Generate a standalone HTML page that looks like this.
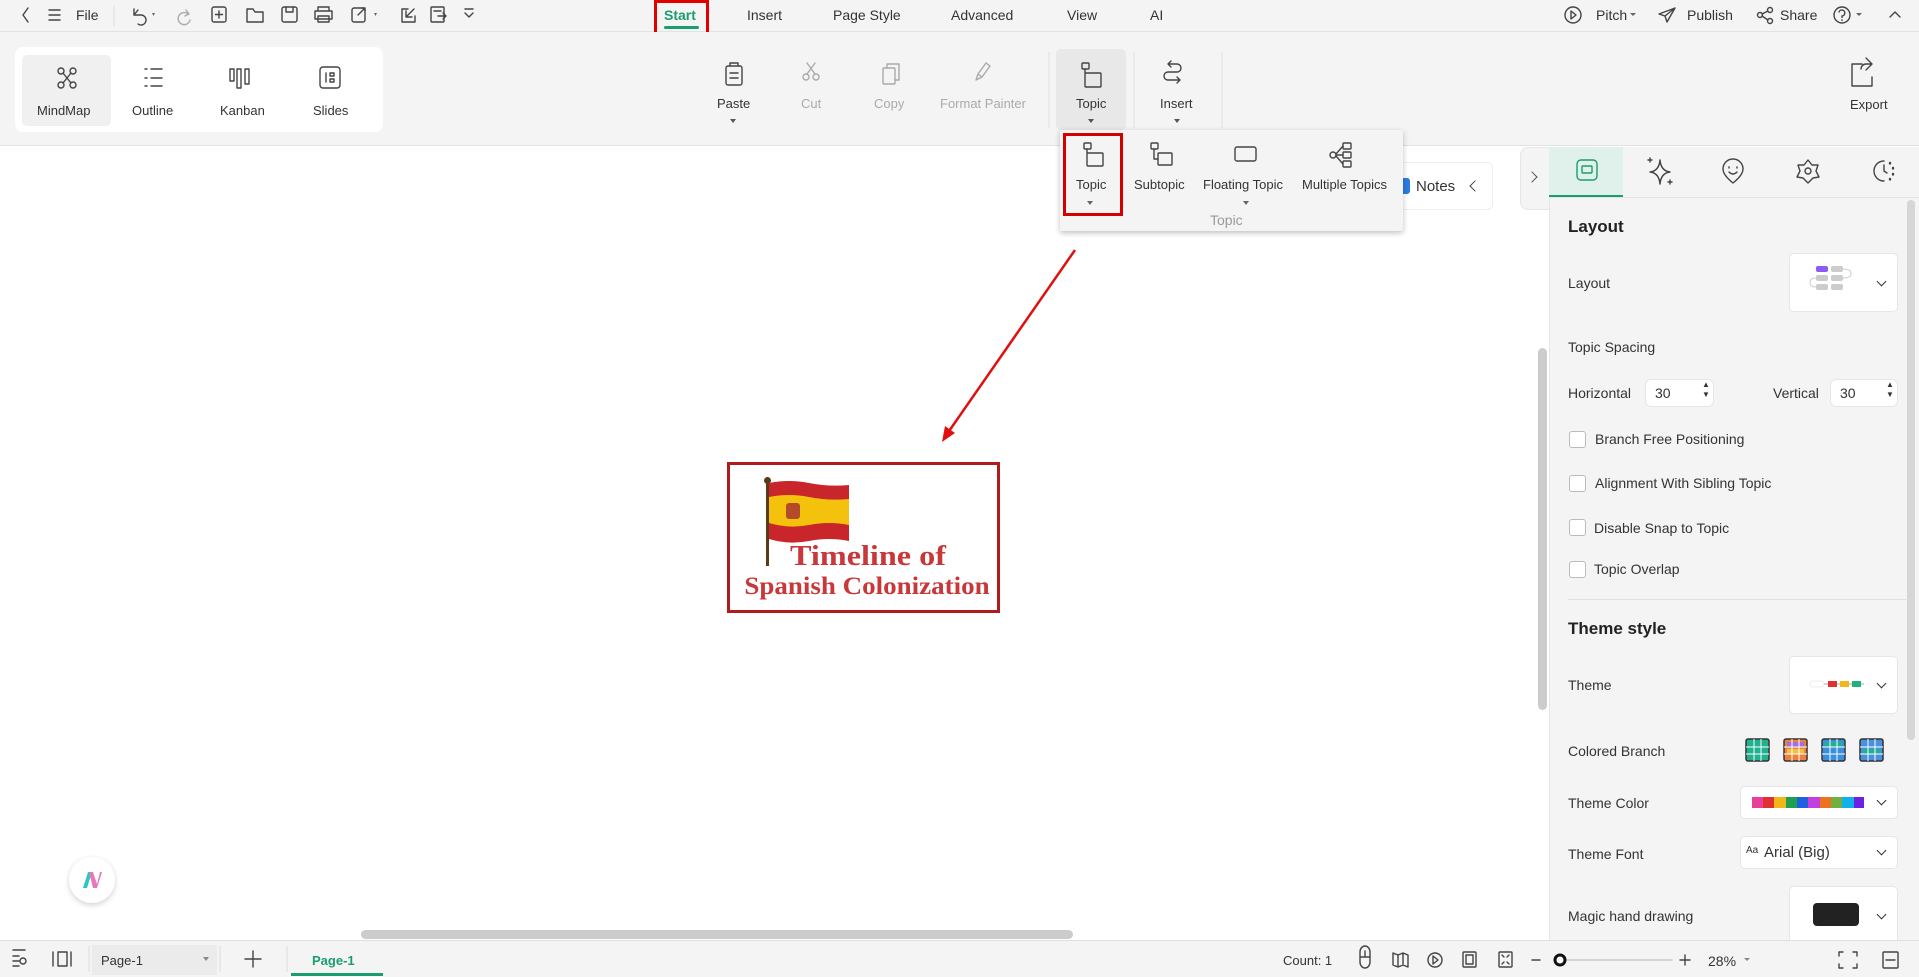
<!DOCTYPE html>
<html><head><meta charset="utf-8">
<style>
*{margin:0;padding:0;box-sizing:border-box}
body{width:1919px;height:977px;overflow:hidden;position:relative;background:#fff;font-family:"Liberation Sans",sans-serif;font-size:13px;color:#333}
.a{position:absolute}
.t{position:absolute;white-space:nowrap}
svg{position:absolute;overflow:visible}
.ic{fill:none;stroke:#444;stroke-width:1.4;stroke-linecap:round;stroke-linejoin:round}
.gr{stroke:#aaa}
.lbl{font-size:14px;color:#333}
.cb{position:absolute;width:17px;height:17px;border:1px solid #bbb;border-radius:3px;background:#fff;left:1569px}
.box{position:absolute;background:#fff;border:1px solid #e6e6e6;border-radius:5px}
.chev{position:absolute;width:7px;height:7px;border-right:1.6px solid #333;border-bottom:1.6px solid #333;transform:rotate(45deg)}
</style></head><body>
<!-- top bar -->
<div class="a" style="left:0;top:0;width:1919px;height:32px;background:#f4f4f4;border-bottom:1px solid #e2e2e2"></div>
<svg width="1919" height="32" style="left:0;top:0">
<g class="ic">
<path d="M28 8l-5 7 5 7"/>
<path d="M49 10h11M49 15h11M49 20h11"/>
<path d="M134 9v6h7a5 5 0 1 1-3 9"/><path d="M134 15l4-5"/>
<g class="gr"><path d="M186 10l3 4-4 2"/><path d="M188 14a6 6 0 1 0 2 6"/></g>
<rect x="212" y="7" width="14" height="15" rx="2"/><path d="M219 11v7M215.5 14.5h7"/>
<path d="M247 9h6l2 3h8v10h-16z"/>
<rect x="282" y="7" width="15" height="15" rx="2"/><path d="M286 7v5h7V7"/>
<path d="M318 11V7h11v4M315 11h17v8h-17zM318 16h11v6h-11z"/>
<rect x="352" y="8" width="13" height="14" rx="2"/><path d="M358 15l7-7M362 8h3v3"/>
<path d="M408 9h-6v13h13v-6M406 17l8-8M406 11v6h6"/>
<rect x="431" y="7" width="13" height="15" rx="1"/><path d="M434 11h7M438 16h8M443 13l3 3-3 3"/>
<path d="M465 13l4 4 4-4M465 9h8"/>
</g>
<path d="M152 13l3 0-1.5 3z" fill="#666"/><path d="M374 13l3 0-1.5 3z" fill="#666"/>
<line x1="114" y1="6" x2="114" y2="26" stroke="#ddd"/>
</svg>
<div class="t" style="left:76px;top:7px;font-size:14px">File</div>
<div class="a" style="left:654px;top:0;width:55px;height:38px;border:3px solid #e00000"></div>
<div class="t" style="left:664px;top:7px;font-size:14px;font-weight:bold;color:#1a9e6e">Start</div>
<div class="a" style="left:664px;top:26px;width:35px;height:3px;background:#1a9e6e;border-radius:2px"></div>
<div class="t" style="left:747px;top:7px;font-size:14px">Insert</div>
<div class="t" style="left:833px;top:7px;font-size:14px">Page Style</div>
<div class="t" style="left:951px;top:7px;font-size:14px">Advanced</div>
<div class="t" style="left:1067px;top:7px;font-size:14px">View</div>
<div class="t" style="left:1150px;top:7px;font-size:14px">AI</div>
<svg width="1919" height="32" style="left:0;top:0"><g class="ic">
<circle cx="1573" cy="15" r="8"/><path d="M1571 11v8l5-4z"/>
<path d="M1675 8l-16 6 6 2 2 6z M1665 16l10-8"/>
<circle cx="1770" cy="10" r="2.5"/><circle cx="1770" cy="21" r="2.5"/><circle cx="1760" cy="15" r="2.5"/><path d="M1762 14l6-3M1762 16l6 4"/>
<circle cx="1842" cy="15" r="8"/><path d="M1839 12a3 3 0 1 1 3 4v1.5M1842 20v.5"/>
<path d="M1890 17l5-5 5 5"/>
</g><path d="M1630 13h6l-3 3z M1856 13h6l-3 3z" fill="#666"/></svg>
<div class="t" style="left:1596px;top:7px;font-size:14px">Pitch</div>
<div class="t" style="left:1687px;top:7px;font-size:14px">Publish</div>
<div class="t" style="left:1780px;top:7px;font-size:14px">Share</div>

<!-- toolbar -->
<div class="a" style="left:0;top:32px;width:1919px;height:114px;background:#f4f4f4;border-bottom:1px solid #e2e2e2"></div>
<div class="a" style="left:15px;top:47px;width:368px;height:85px;background:#fff;border-radius:8px"></div>
<div class="a" style="left:22px;top:55px;width:89px;height:71px;background:#f0f0f0;border-radius:5px"></div>
<svg width="1919" height="146" style="left:0;top:0"><g class="ic" stroke-width="1.5">
<circle cx="61" cy="71" r="3"/><circle cx="73" cy="71" r="3"/><circle cx="61" cy="85" r="3"/><circle cx="73" cy="85" r="3"/><path d="M63 73l8 10M71 73l-8 10"/>
<path d="M145 69h2M151 69h11M145 78h2M151 78h11M145 86h2M151 86h11"/>
<rect x="230" y="69" width="4" height="12"/><rect x="237" y="69" width="4" height="19"/><rect x="245" y="69" width="4" height="15"/>
<rect x="320" y="67" width="20" height="21" rx="3"/><path d="M326 73v9M330 73h4v3h-4zM330 79h4v3h-4z"/>
<rect x="726" y="66" width="16" height="19" rx="2"/><path d="M730 66v-3h8v3M730 73h8M730 78h8"/>
<g class="gr"><circle cx="806" cy="77" r="3"/><circle cx="816" cy="77" r="3"/><path d="M807 74l8-11M815 74l-8-11"/>
<rect x="883" y="68" width="12" height="16" rx="1"/><path d="M887 68v-4h12v16h-4"/>
<path d="M978 74l8-11 4 3-8 11zM978 74l-2 6 6-3"/></g>
<path d="M1168 64h9a4 4 0 0 1 0 8h-9a4 4 0 0 0 0 8h12M1168 64l3-3M1168 64l3 3M1180 80l-3-3M1180 80l-3 3"/>
<path d="M1862 64h-10v22h20v-9M1866 58l6 6-6 6M1872 64h-6a5 5 0 0 0-5 5"/>
</g>
<path d="M730 119h6l-3 4z M1174 119h6l-3 4z" fill="#555"/>
<line x1="1049" y1="52" x2="1049" y2="128" stroke="#e0e0e0"/><line x1="1134" y1="52" x2="1134" y2="128" stroke="#e0e0e0"/><line x1="1222" y1="52" x2="1222" y2="128" stroke="#e0e0e0"/>
</svg>
<div class="a" style="left:1056px;top:49px;width:70px;height:81px;background:#e8e8e8;border-radius:5px"></div>
<svg width="1919" height="146" style="left:0;top:0"><g class="ic" stroke-width="1.5"><rect x="1082" y="63" width="7" height="6" rx="1"/><rect x="1085" y="73" width="16" height="14" rx="1"/><path d="M1085 69v4"/></g><path d="M1088 119h6l-3 4z" fill="#555"/></svg>
<div class="t" style="left:37px;top:103px;font-size:13px">MindMap</div>
<div class="t" style="left:132px;top:103px">Outline</div>
<div class="t" style="left:220px;top:103px">Kanban</div>
<div class="t" style="left:313px;top:103px">Slides</div>
<div class="t" style="left:717px;top:96px">Paste</div>
<div class="t" style="left:801px;top:96px;color:#aaa">Cut</div>
<div class="t" style="left:874px;top:96px;color:#aaa">Copy</div>
<div class="t" style="left:940px;top:96px;color:#aaa">Format Painter</div>
<div class="t" style="left:1076px;top:96px">Topic</div>
<div class="t" style="left:1160px;top:96px">Insert</div>
<div class="t" style="left:1850px;top:97px">Export</div>

<!-- canvas overlays -->
<div class="a" style="left:1383px;top:162px;width:110px;height:48px;background:#fff;border:1px solid #eee;border-radius:6px"></div>
<div class="a" style="left:1396px;top:178px;width:14px;height:16px;background:#2a7de1;border-radius:3px"></div>
<div class="t" style="left:1416px;top:178px;font-size:15px">Notes</div>
<div class="a" style="left:1471px;top:182px;width:8px;height:8px;border-left:1.5px solid #444;border-bottom:1.5px solid #444;transform:rotate(45deg)"></div>

<!-- dropdown -->
<div class="a" style="left:1060px;top:130px;width:343px;height:101px;background:#f4f4f4;box-shadow:0 2px 6px rgba(0,0,0,.25);border-radius:2px"></div>
<div class="a" style="left:1063px;top:133px;width:60px;height:83px;border:3px solid #d40000"></div>
<svg width="1919" height="240" style="left:0;top:0"><g class="ic" stroke-width="1.5">
<rect x="1084" y="143" width="7" height="6" rx="1"/><rect x="1087" y="153" width="16" height="13" rx="1"/><path d="M1087 149v4"/>
<rect x="1151" y="143" width="7" height="6" rx="1"/><rect x="1158" y="153" width="14" height="12" rx="1"/><path d="M1154 149v10h4"/>
<rect x="1235" y="147" width="21" height="14" rx="2"/>
<rect x="1343" y="143" width="8" height="6" rx="1"/><rect x="1343" y="152" width="8" height="6" rx="1"/><rect x="1343" y="161" width="8" height="6" rx="1"/><circle cx="1333" cy="155" r="3"/><path d="M1336 154l7-8M1336 155h7M1336 156l7 8"/>
</g><path d="M1087 201h6l-3 4z M1243 201h6l-3 4z" fill="#666"/></svg>
<div class="t" style="left:1076px;top:177px">Topic</div>
<div class="t" style="left:1134px;top:177px">Subtopic</div>
<div class="t" style="left:1203px;top:177px">Floating Topic</div>
<div class="t" style="left:1302px;top:177px">Multiple Topics</div>
<div class="t" style="left:1210px;top:212px;color:#999;font-size:14px">Topic</div>

<!-- arrow -->
<svg width="1919" height="977" style="left:0;top:0"><line x1="1075" y1="250" x2="947" y2="434" stroke="#e01010" stroke-width="2.5"/><path d="M942 442l3-16 10 7z" fill="#e01010"/></svg>

<!-- central topic -->
<div class="a" style="left:727px;top:462px;width:273px;height:151px;border:3px solid #b01c1c;background:#fff"></div>
<div class="a" style="left:764px;top:477px;width:7px;height:7px;border-radius:50%;background:#5a3a1a"></div>
<div class="a" style="left:766px;top:480px;width:3px;height:86px;background:#5a3a1a"></div>
<svg width="90" height="70" style="left:769px;top:479px">
<path d="M0 4 Q20 0 40 4 T80 6 V62 Q60 58 40 62 T0 60Z" fill="#c8262b"/>
<path d="M0 18 Q20 14 40 18 T80 20 V46 Q60 42 40 46 T0 44Z" fill="#f4c20d"/>
<rect x="17" y="24" width="14" height="16" rx="3" fill="#b34a2a"/>
</svg>
<div class="t" style="left:868px;top:541px;transform:translateX(-50%) scaleX(1.15);font-family:'Liberation Serif',serif;font-weight:bold;font-size:28px;color:#c8373a">Timeline of</div>
<div class="t" style="left:867px;top:573px;transform:translateX(-50%) scaleX(1.08);font-family:'Liberation Serif',serif;font-weight:bold;font-size:25px;color:#c8373a">Spanish Colonization</div>

<!-- AI logo -->
<div class="a" style="left:69px;top:857px;width:46px;height:46px;border-radius:50%;background:#fff;box-shadow:0 2px 6px rgba(0,0,0,.18)"></div>
<svg width="20" height="20" style="left:82px;top:870px"><path d="M1 18L6 2h4L5 18z" fill="#2cc6c6"/><path d="M7 2h4l4 12 3-12h2l-5 16h-4z" fill="#e879b8"/></svg>

<!-- scrollbars -->
<div class="a" style="left:361px;top:930px;width:712px;height:9px;background:#ccc;border-radius:5px"></div>
<div class="a" style="left:1538px;top:348px;width:9px;height:362px;background:#ccc;border-radius:5px"></div>

<!-- right panel -->
<div class="a" style="left:1520px;top:147px;width:40px;height:63px;background:#f4f4f4;border:1px solid #e6e6e6;border-radius:8px"></div>
<div class="a" style="left:1528px;top:173px;width:8px;height:8px;border-right:1.5px solid #555;border-top:1.5px solid #555;transform:rotate(45deg)"></div>
<div class="a" style="left:1549px;top:147px;width:370px;height:793px;background:#f4f4f4;border-left:1px solid #e6e6e6"></div>
<div class="a" style="left:1549px;top:147px;width:74px;height:49px;background:#dff1ea"></div>
<div class="a" style="left:1549px;top:195px;width:74px;height:3px;background:#1a9e6e"></div>
<div class="a" style="left:1549px;top:197px;width:370px;height:1px;background:#e4e4e4"></div>
<svg width="1919" height="220" style="left:0;top:0"><g class="ic" stroke-width="1.8" stroke="#222">
<rect x="1577" y="160" width="20" height="20" rx="4" stroke="#1a9e6e"/><rect x="1582" y="166" width="10" height="7" rx="1" stroke="#1a9e6e"/>
<path d="M1660 160q1 11 10 12q-9 1-10 12q-1-11-10-12q9-1 10-12z"/><path d="M1650 158v4M1648 160h4M1670 180v4M1668 182h4"/>
<path d="M1733 183q-10-8-10-14a10 10 0 0 1 20 0q0 6-10 14z"/><path d="M1729 172q4 4 8 0M1729 167v1M1737 167v1"/>
<path d="M1808 160l4 5 6 0-2 6 3 6-6 1-5 5-5-5-6-1 3-6-2-6 6 0z"/><circle cx="1808" cy="171" r="3"/>
<path d="M1884 161a10 10 0 1 0 0 20"/><path d="M1884 165v6l3 2"/><path d="M1890 163v.5M1893 168v.5M1893 174v.5M1890 179v.5" stroke-width="2.4"/>
</g></svg>
<div class="a" style="left:1907px;top:200px;width:8px;height:540px;background:#d6d6d6;border-radius:4px"></div>

<div class="t" style="left:1568px;top:217px;font-size:17px;font-weight:bold;color:#222">Layout</div>
<div class="t lbl" style="left:1568px;top:275px">Layout</div>
<div class="box" style="left:1789px;top:253px;width:109px;height:59px"></div>
<svg width="60" height="40" style="left:1813px;top:263px"><rect x="3" y="3" width="12" height="6" rx="2" fill="#8b5cf6"/><rect x="18" y="3" width="12" height="6" rx="2" fill="#ccc"/><rect x="3" y="12" width="12" height="6" rx="2" fill="#ccc"/><rect x="18" y="12" width="12" height="6" rx="2" fill="#ccc"/><rect x="3" y="21" width="12" height="6" rx="2" fill="#ccc"/><rect x="18" y="21" width="12" height="6" rx="2" fill="#ccc"/><path d="M30 6q8 0 8 4.5t-8 4.5M3 15q-6 0-6 4.5t6 4.5" fill="none" stroke="#ccc"/></svg>
<div class="chev" style="left:1878px;top:278px"></div>
<div class="t lbl" style="left:1568px;top:339px">Topic Spacing</div>
<div class="t lbl" style="left:1568px;top:385px">Horizontal</div>
<div class="box" style="left:1645px;top:379px;width:69px;height:28px;border-radius:6px"></div>
<div class="t lbl" style="left:1655px;top:385px">30</div>
<div class="t" style="left:1702px;top:380px;font-size:8px;line-height:10px">▲<br>▼</div>
<div class="t lbl" style="left:1773px;top:385px">Vertical</div>
<div class="box" style="left:1830px;top:379px;width:68px;height:28px;border-radius:6px"></div>
<div class="t lbl" style="left:1840px;top:385px">30</div>
<div class="t" style="left:1886px;top:380px;font-size:8px;line-height:10px">▲<br>▼</div>
<div class="cb" style="top:431px"></div><div class="t lbl" style="left:1595px;top:431px">Branch Free Positioning</div>
<div class="cb" style="top:475px"></div><div class="t lbl" style="left:1595px;top:475px">Alignment With Sibling Topic</div>
<div class="cb" style="top:519px"></div><div class="t lbl" style="left:1594px;top:520px">Disable Snap to Topic</div>
<div class="cb" style="top:561px"></div><div class="t lbl" style="left:1594px;top:561px">Topic Overlap</div>
<div class="a" style="left:1568px;top:599px;width:340px;height:1px;background:#e0e0e0"></div>
<div class="t" style="left:1568px;top:619px;font-size:17px;font-weight:bold;color:#222">Theme style</div>
<div class="t lbl" style="left:1568px;top:677px">Theme</div>
<div class="box" style="left:1789px;top:656px;width:109px;height:58px"></div>
<svg width="60" height="10" style="left:1810px;top:680px"><rect x="0" y="1" width="14" height="6" rx="3" fill="#fff" stroke="#eee"/><path d="M14 4h40" stroke="#aaa"/><rect x="18" y="1" width="9" height="6" fill="#e03030"/><rect x="30" y="1" width="9" height="6" fill="#f2b51a"/><rect x="42" y="1" width="9" height="6" fill="#1fb27a"/></svg>
<div class="chev" style="left:1878px;top:680px"></div>
<div class="t lbl" style="left:1568px;top:743px">Colored Branch</div>
<svg width="160" height="30" style="left:1745px;top:737px">
<g stroke="#333" stroke-width="1.5"><rect x="1" y="2" width="23" height="22" rx="2" fill="#1fb28f"/><rect x="39" y="2" width="23" height="22" rx="2" fill="#f08040"/><rect x="77" y="2" width="23" height="22" rx="2" fill="#3a8fe0"/><rect x="115" y="2" width="23" height="22" rx="2" fill="#4a90e0"/></g>
<rect x="80" y="5" width="17" height="5" fill="#1fb28f"/><rect x="118" y="12" width="17" height="5" fill="#1fb28f"/><rect x="42" y="5" width="17" height="5" fill="#a070e0"/><rect x="42" y="12" width="17" height="5" fill="#f2c040"/>
<path d="M9 2v22M16 2v22M1 10h23M1 17h23M47 2v22M54 2v22M39 10h23M39 17h23M85 2v22M92 2v22M77 10h23M77 17h23M123 2v22M130 2v22M115 10h23M115 17h23" stroke="#fff" stroke-width="1"/>
</svg>
<div class="t lbl" style="left:1568px;top:795px">Theme Color</div>
<div class="box" style="left:1740px;top:786px;width:158px;height:33px"></div>
<svg width="120" height="12" style="left:1752px;top:797px"><rect x="0" width="11" height="11" fill="#e8409a"/><rect x="11" width="11" height="11" fill="#e03030"/><rect x="22" width="12" height="11" fill="#f2b51a"/><rect x="34" width="11" height="11" fill="#1fa050"/><rect x="45" width="11" height="11" fill="#1f60e0"/><rect x="56" width="12" height="11" fill="#c040e0"/><rect x="68" width="11" height="11" fill="#f07020"/><rect x="79" width="11" height="11" fill="#70b040"/><rect x="90" width="12" height="11" fill="#10b0e8"/><rect x="102" width="10" height="11" fill="#7020e0"/></svg>
<div class="chev" style="left:1878px;top:797px"></div>
<div class="t lbl" style="left:1568px;top:846px">Theme Font</div>
<div class="box" style="left:1740px;top:836px;width:158px;height:33px"></div>
<div class="t" style="left:1746px;top:845px;font-size:10px">Aa</div>
<div class="t" style="left:1764px;top:844px;font-size:15px">Arial (Big)</div>
<div class="chev" style="left:1878px;top:847px"></div>
<div class="t lbl" style="left:1568px;top:908px">Magic hand drawing</div>
<div class="box" style="left:1789px;top:886px;width:109px;height:60px"></div>
<div class="a" style="left:1813px;top:903px;width:46px;height:23px;background:#222;border-radius:4px"></div>
<div class="chev" style="left:1878px;top:911px"></div>

<!-- bottom bar -->
<div class="a" style="left:0;top:940px;width:1919px;height:37px;background:#f4f4f4;border-top:1px solid #e0e0e0"></div>
<div class="a" style="left:92px;top:945px;width:125px;height:30px;background:#ebebeb"></div>
<svg width="1919" height="977" style="left:0;top:0"><g class="ic">
<path d="M13 950h12M13 956h6M13 961h6M13 966h6"/><circle cx="23" cy="961" r="3"/>
<path d="M53 952v14M58 952h9v14h-9zM71 952v14"/>
<path d="M253 951v16M245 959h16"/>
<path d="M1360 952a5 6 0 0 1 10 0v10a5 6 0 0 1-10 0zM1360 957h10M1365 951v6"/>
<path d="M1393 953l5 2 5-2 5 2v12l-5-2-5 2-5-2zM1398 955v12M1403 953v12"/>
<circle cx="1435" cy="960" r="7"/><path d="M1433 956v8l5-4z"/>
<rect x="1463" y="952" width="13" height="15" rx="1"/><rect x="1466" y="955" width="7" height="9"/>
<rect x="1499" y="952" width="13" height="15" rx="1"/><path d="M1502 955l2 2M1509 955l-2 2M1502 964l2-2M1509 964l-2-2"/>
<path d="M1532 960h8"/><path d="M1565 960h107" stroke="#ccc"/>
<path d="M1680 960h10M1685 955v10"/>
<path d="M1843 952h-4v4M1853 952h4v4M1843 968h-4v-4M1853 968h4v-4"/>
<rect x="1883" y="952" width="15" height="16" rx="1"/><path d="M1886 960h9"/>
</g><circle cx="1560" cy="960" r="5" fill="#fff" stroke="#111" stroke-width="3"/>
<path d="M203 957h6l-3 4z M1744 958h6l-3 3z" fill="#888"/>
<line x1="89" y1="946" x2="89" y2="972" stroke="#ddd"/><line x1="220" y1="946" x2="220" y2="972" stroke="#ddd"/><line x1="287" y1="946" x2="287" y2="972" stroke="#ddd"/>
</svg>
<div class="t" style="left:101px;top:953px">Page-1</div>
<div class="t" style="left:312px;top:953px;font-weight:bold;color:#1a9e6e">Page-1</div>
<div class="a" style="left:291px;top:973px;width:92px;height:3px;background:#1a9e6e"></div>
<div class="t" style="left:1283px;top:953px">Count: 1</div>
<div class="t" style="left:1708px;top:953px;font-size:14px">28%</div>
</body></html>
